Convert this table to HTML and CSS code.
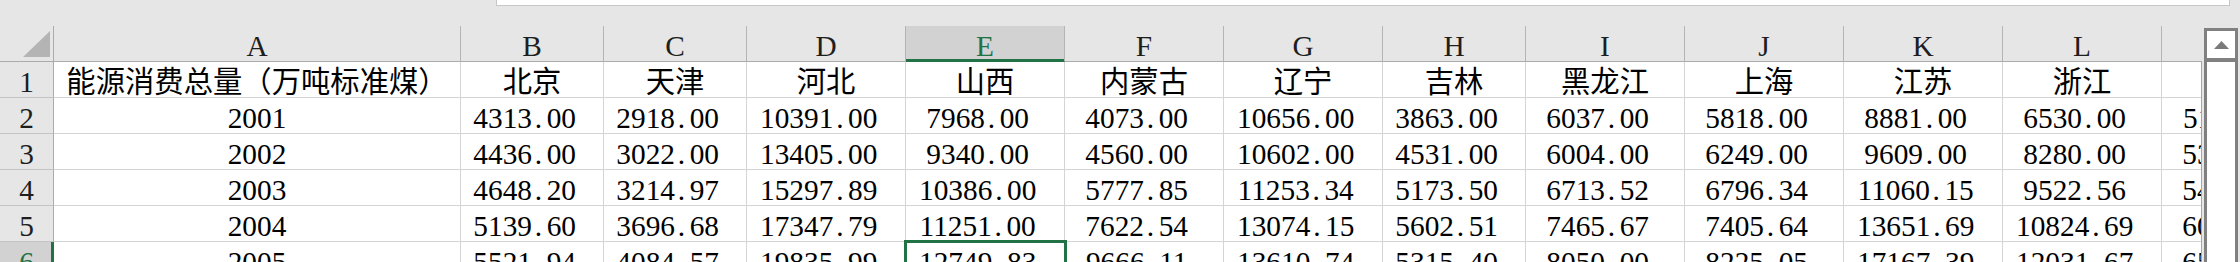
FILE: index.html
```html
<!DOCTYPE html>
<html lang="zh">
<head>
<meta charset="utf-8">
<title>Sheet</title>
<link rel="stylesheet" href="styles.css">
</head>
<body>
<div class="app">
  <div class="topbar"><div class="fx"></div></div>
  <div class="main">
    <div class="sheet">
      <div class="grid hdr">
        <div class="corner"><svg width="53" height="35" viewBox="0 0 53 35"><polygon points="50,5 50,31 23,31" fill="#b4b4b4"/></svg></div>
        <div>A</div><div>B</div><div>C</div><div>D</div><div class="sel">E</div><div>F</div><div>G</div><div>H</div><div>I</div><div>J</div><div>K</div><div>L</div><div>M</div>
      </div>
      <div class="grid body">
        <div class="rh">1</div>
        <div>能源消费总量（万吨标准煤）</div><div>北京</div><div>天津</div><div>河北</div><div>山西</div><div>内蒙古</div><div>辽宁</div><div>吉林</div><div>黑龙江</div><div>上海</div><div>江苏</div><div>浙江</div><div>安徽</div>

        <div class="rh">2</div>
        <div>2001</div>
        <div class="n">4313<i>.</i>00</div><div class="n">2918<i>.</i>00</div><div class="n">10391<i>.</i>00</div><div class="n">7968<i>.</i>00</div><div class="n">4073<i>.</i>00</div><div class="n">10656<i>.</i>00</div><div class="n">3863<i>.</i>00</div><div class="n">6037<i>.</i>00</div><div class="n">5818<i>.</i>00</div><div class="n">8881<i>.</i>00</div><div class="n">6530<i>.</i>00</div><div class="n">5115<i>.</i>00</div>

        <div class="rh">3</div>
        <div>2002</div>
        <div class="n">4436<i>.</i>00</div><div class="n">3022<i>.</i>00</div><div class="n">13405<i>.</i>00</div><div class="n">9340<i>.</i>00</div><div class="n">4560<i>.</i>00</div><div class="n">10602<i>.</i>00</div><div class="n">4531<i>.</i>00</div><div class="n">6004<i>.</i>00</div><div class="n">6249<i>.</i>00</div><div class="n">9609<i>.</i>00</div><div class="n">8280<i>.</i>00</div><div class="n">5317<i>.</i>00</div>

        <div class="rh">4</div>
        <div>2003</div>
        <div class="n">4648<i>.</i>20</div><div class="n">3214<i>.</i>97</div><div class="n">15297<i>.</i>89</div><div class="n">10386<i>.</i>00</div><div class="n">5777<i>.</i>85</div><div class="n">11253<i>.</i>34</div><div class="n">5173<i>.</i>50</div><div class="n">6713<i>.</i>52</div><div class="n">6796<i>.</i>34</div><div class="n">11060<i>.</i>15</div><div class="n">9522<i>.</i>56</div><div class="n">5457<i>.</i>00</div>

        <div class="rh">5</div>
        <div>2004</div>
        <div class="n">5139<i>.</i>60</div><div class="n">3696<i>.</i>68</div><div class="n">17347<i>.</i>79</div><div class="n">11251<i>.</i>00</div><div class="n">7622<i>.</i>54</div><div class="n">13074<i>.</i>15</div><div class="n">5602<i>.</i>51</div><div class="n">7465<i>.</i>67</div><div class="n">7405<i>.</i>64</div><div class="n">13651<i>.</i>69</div><div class="n">10824<i>.</i>69</div><div class="n">6017<i>.</i>00</div>

        <div class="rh sel">6</div>
        <div>2005</div>
        <div class="n">5521<i>.</i>94</div><div class="n">4084<i>.</i>57</div><div class="n">19835<i>.</i>99</div><div class="n cur">12749<i>.</i>83</div><div class="n">9666<i>.</i>11</div><div class="n">13610<i>.</i>74</div><div class="n">5315<i>.</i>40</div><div class="n">8050<i>.</i>00</div><div class="n">8225<i>.</i>05</div><div class="n">17167<i>.</i>39</div><div class="n">12031<i>.</i>67</div><div class="n">6506<i>.</i>00</div>
      </div>
    </div>
    <div class="vscroll">
      <div class="up"><svg width="15" height="8" viewBox="0 0 15 8"><polygon points="0,8 7.5,0 15,8" fill="#7a7a7a"/></svg></div>
      <div class="track"></div>
    </div>
  </div>
</div>
</body>
</html>
```
FILE: styles.css
```css
* {
  box-sizing: border-box;
  margin: 0;
  padding: 0;
}

html, body {
  width: 2240px;
  height: 262px;
  overflow: hidden;
}

body {
  background: #e6e6e6;
  font-family: "Liberation Serif", "Noto Sans CJK SC", serif;
  font-size: 29.33px;
  color: #000;
}

.app {
  width: 2240px;
  height: 262px;
  display: flex;
  flex-direction: column;
}

.topbar {
  height: 26px;
  flex: none;
}

.fx {
  margin-left: 496px;
  width: 1734px;
  height: 6px;
  background: #fff;
  border: 1px solid #c6c6c6;
  border-top: none;
}

.main {
  flex: 1;
  min-height: 0;
  display: flex;
}

.sheet {
  width: 2202px;
  flex: none;
  display: flex;
  flex-direction: column;
  min-height: 0;
}

.grid {
  display: grid;
  grid-template-columns: 54px 407px 143px 143px 159px 159px 159px 159px 143px 159px 159px 159px 159px 159px;
  grid-auto-rows: 36px;
  width: 2202px;
  overflow: hidden;
  flex: none;
}

.grid > div {
  white-space: nowrap;
  text-align: center;
  padding-top: 6px;
  line-height: 29px;
  border-right: 1px solid #d4d4d4;
  border-bottom: 1px solid #d4d4d4;
}

.hdr > div {
  background: #e6e6e6;
  border-right-color: #b4b4b4;
  border-bottom-color: #ababab;
  color: #1e1e1e;
}

.hdr > .corner {
  padding-top: 0;
  border-right-color: #ababab;
}

.corner svg {
  display: block;
}

.hdr > .sel {
  background: #d2d2d2;
  color: #217346;
  border-bottom-color: #217346;
  box-shadow: inset 0 -2px 0 #217346;
}

.body {
  flex: 1;
  min-height: 0;
  background: #fff;
  border-right: 1px solid #a6a6a6;
}

.body > .rh {
  background: #e6e6e6;
  color: #1e1e1e;
  border-right-color: #ababab;
  border-bottom-color: #c4c4c4;
}

.body > .rh.sel {
  background: #d2d2d2;
  color: #217346;
  border-right-color: #217346;
  box-shadow: inset -2px 0 0 #217346;
}

.n {
  padding-right: 0.5em;
}

.n i {
  font-style: normal;
  display: inline-block;
  width: 0.5em;
  text-align: center;
  text-indent: -0.06em;
}

.body > .cur {
  position: relative;
  z-index: 1;
  outline: 3px solid #217346;
  outline-offset: -1px;
}

.vscroll {
  flex: none;
  width: 34px;
  margin-left: 2px;
  margin-top: 2px;
  background: #fff;
  border: 3px solid #808080;
  border-bottom: none;
  display: flex;
  flex-direction: column;
}

.up {
  height: 31px;
  flex: none;
  border-bottom: 4px solid #808080;
  display: flex;
  align-items: center;
  justify-content: center;
}

.up svg {
  display: block;
}

.track {
  flex: 1;
}
```
